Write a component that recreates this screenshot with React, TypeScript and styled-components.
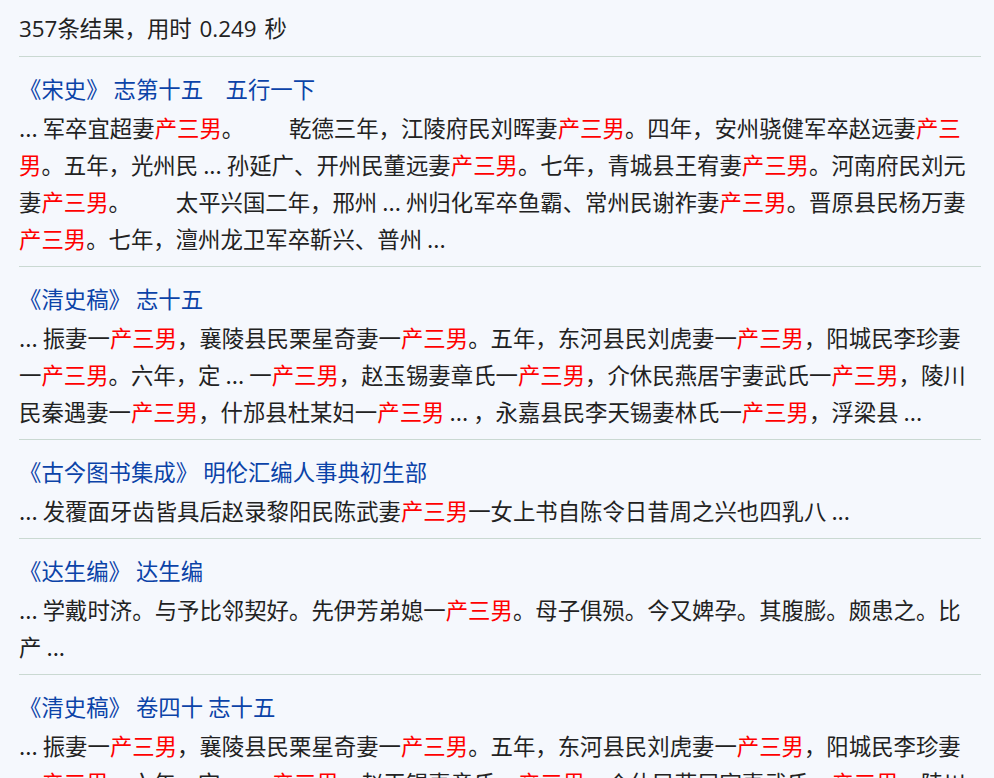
import React from "react";
import styled, { createGlobalStyle } from "styled-components";

const GlobalStyle = createGlobalStyle`
  html, body {
    margin: 0;
    padding: 0;
    background: #f5f8fd;
  }
  body {
    font-family: "Noto Sans CJK SC", sans-serif;
    color: #222;
  }
`;

const Page = styled.div`
  padding: 0 13px 0 19px;
  font-size: 22.4px;
  line-height: 37px;
`;

const Summary = styled.div`
  padding: 10px 0 9px;
  border-bottom: 1px solid #cad9d2;
  font-family: "Open Sans", "Noto Sans CJK SC", sans-serif;
  word-spacing: 2px;
`;

const Result = styled.div`
  padding: 13px 0 9px;
  border-bottom: 1px solid #cad9d2;
`;

const Title = styled.a`
  display: block;
  color: #0b43a8;
  text-decoration: none;
  white-space: pre;
`;

const Snippet = styled.div`
  margin-top: 2px;
  color: #222;
`;

const Hit = styled.span`
  color: #ff0000;
`;

// paragraph break inside a snippet: two full-width blanks
const Gap = styled.span`
  display: inline-block;
  width: 2em;
`;

type Item = { title: string; text: string };

const items: Item[] = [
  {
    title: "《宋史》 志第十五　五行一下",
    text:
      "... 军卒宜超妻*。#乾德三年，江陵府民刘晖妻*。四年，安州骁健军卒赵远妻*。五年，光州民 ... 孙延广、开州民董远妻*。七年，青城县王宥妻*。河南府民刘元妻*。#太平兴国二年，邢州 ... 州归化军卒鱼霸、常州民谢祚妻*。晋原县民杨万妻*。七年，澶州龙卫军卒靳兴、普州 ...",
  },
  {
    title: "《清史稿》 志十五",
    text:
      "... 振妻一*，襄陵县民栗星奇妻一*。五年，东河县民刘虎妻一*，阳城民李珍妻一*。六年，定 ... 一*，赵玉锡妻章氏一*，介休民燕居宇妻武氏一*，陵川民秦遇妻一*，什邡县杜某妇一* ... ，永嘉县民李天锡妻林氏一*，浮梁县 ...",
  },
  {
    title: "《古今图书集成》 明伦汇编人事典初生部",
    text: "... 发覆面牙齿皆具后赵录黎阳民陈武妻*一女上书自陈令日昔周之兴也四乳八 ...",
  },
  {
    title: "《达生编》 达生编",
    text: "... 学戴时济。与予比邻契好。先伊芳弟媳一*。母子俱殒。今又婢孕。其腹膨。颇患之。比产 ...",
  },
  {
    title: "《清史稿》 卷四十 志十五",
    text:
      "... 振妻一*，襄陵县民栗星奇妻一*。五年，东河县民刘虎妻一*，阳城民李珍妻一*。六年，定 ... 一*，赵玉锡妻章氏一*，介休民燕居宇妻武氏一*，陵川民秦遇妻一*",
  },
];

// "*" marks the matched phrase, "#" a paragraph gap
function renderSnippet(text: string) {
  const out: React.ReactNode[] = [];
  text.split("#").forEach((chunk, ci) => {
    if (ci > 0) out.push(<Gap key={`g${ci}`}>{"　　"}</Gap>);
    const parts = chunk.split("*");
    parts.forEach((p, i) => {
      out.push(<React.Fragment key={`t${ci}-${i}`}>{p}</React.Fragment>);
      if (i < parts.length - 1) out.push(<Hit key={`h${ci}-${i}`}>产三男</Hit>);
    });
  });
  return out;
}

export default function App() {
  return (
    <>
      <GlobalStyle />
      <Page>
        <Summary>357条结果，用时 0.249 秒</Summary>
        {items.map((it, i) => (
          <Result key={i}>
            <Title href="#">{it.title}</Title>
            <Snippet>{renderSnippet(it.text)}</Snippet>
          </Result>
        ))}
      </Page>
    </>
  );
}
